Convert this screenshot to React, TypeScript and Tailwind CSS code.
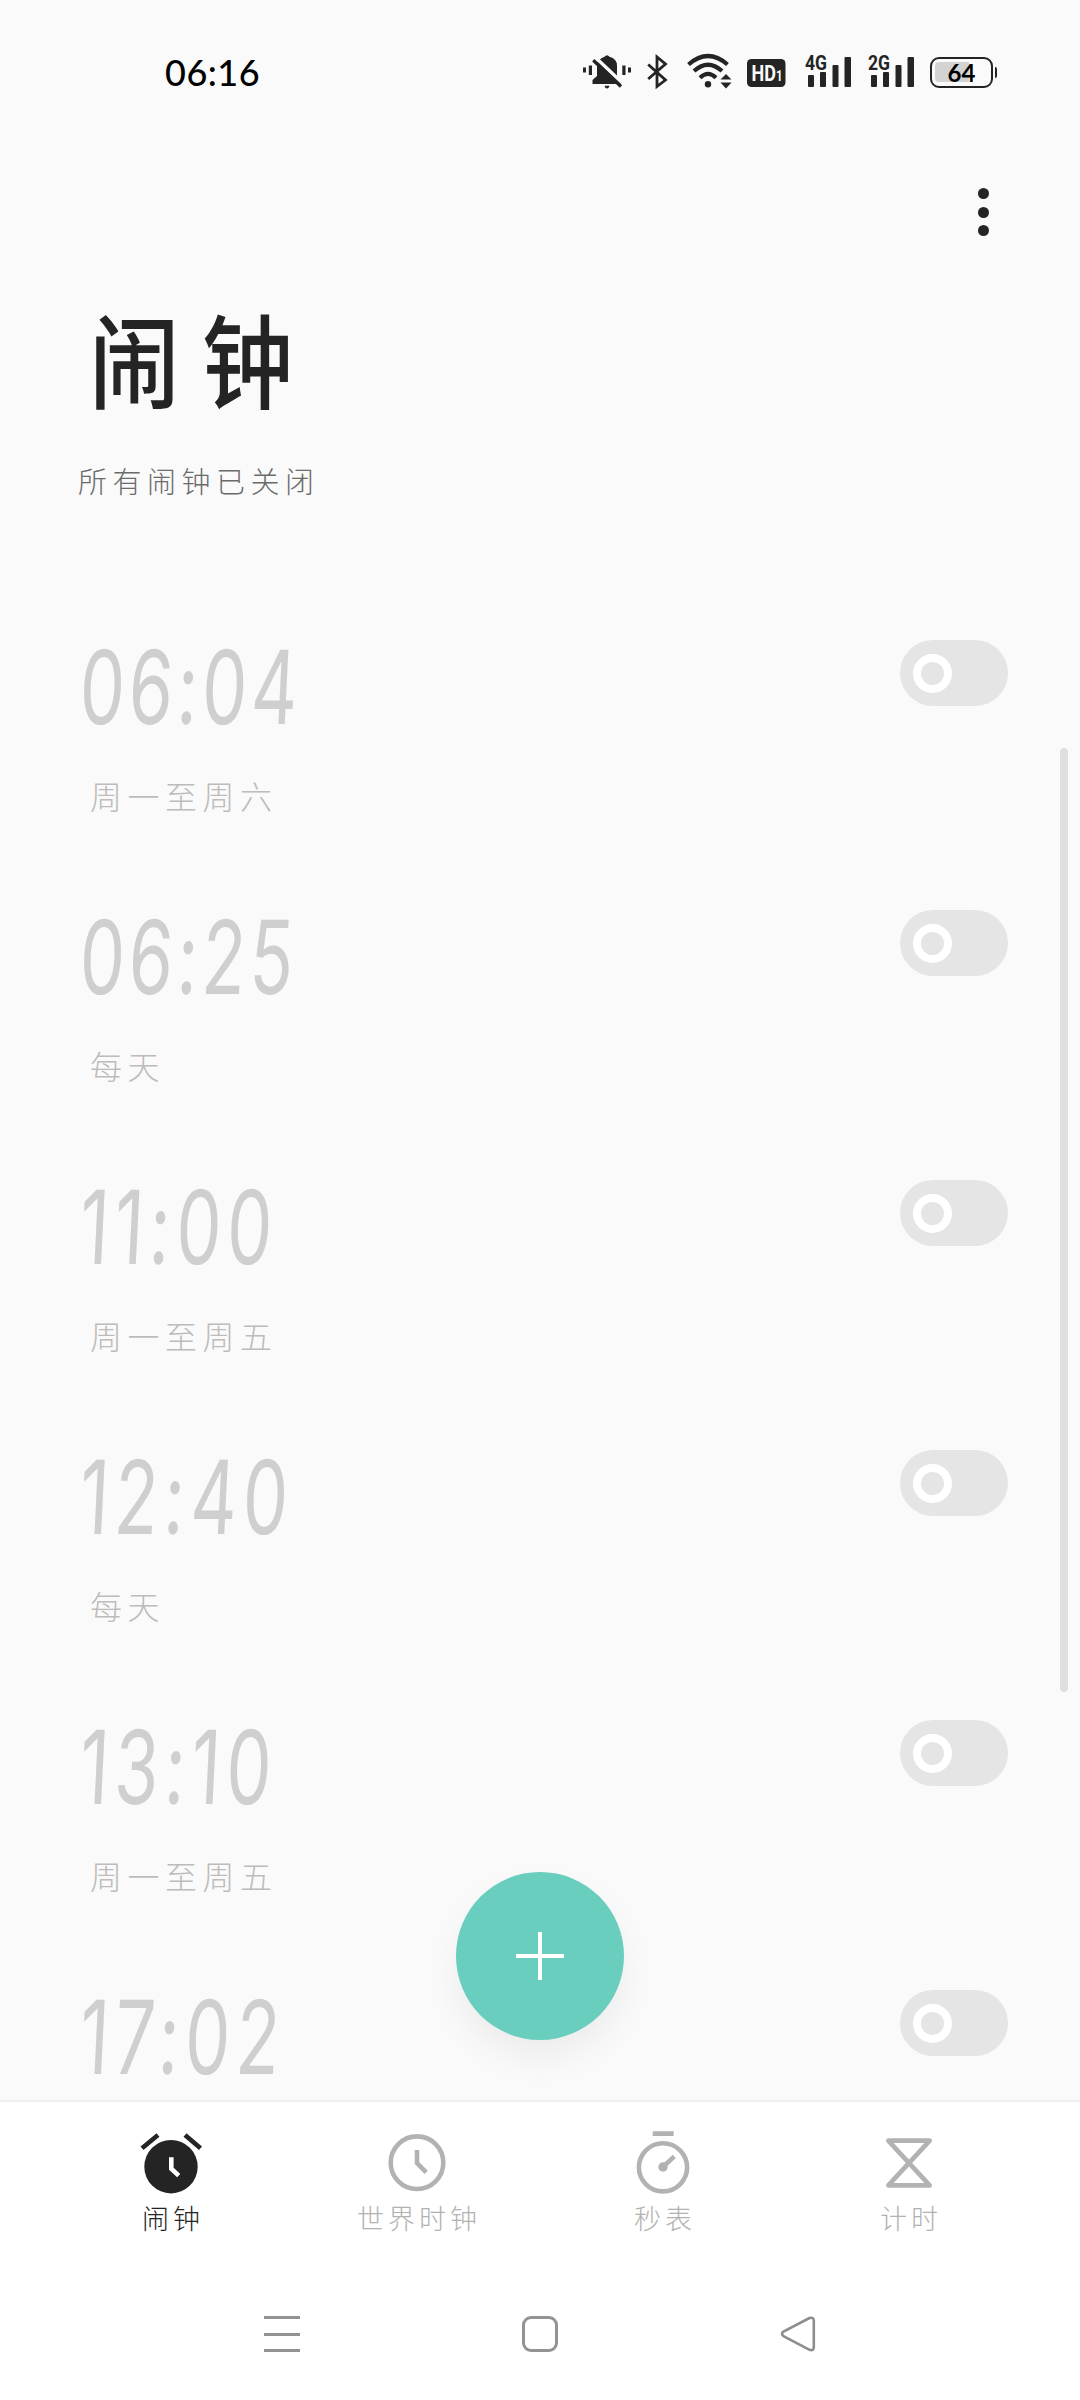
import type { ReactNode } from "react";

interface Alarm {
  time: string;
  repeat?: string;
}

const alarms: Alarm[] = [
  { time: "06:04", repeat: "周一至周六" },
  { time: "06:25", repeat: "每天" },
  { time: "11:00", repeat: "周一至周五" },
  { time: "12:40", repeat: "每天" },
  { time: "13:10", repeat: "周一至周五" },
  { time: "17:02" },
];

function Signal({ label }: { label: string }) {
  return (
    <svg width="46" height="40" viewBox="0 0 46 40" fill="#242424">
      <text
        x="0"
        y="18"
        textLength="22"
        lengthAdjust="spacingAndGlyphs"
        className="font-['Roboto'] text-[20px] font-bold"
      >
        {label}
      </text>
      <rect x="3" y="23" width="6" height="12" rx="1" />
      <rect x="15" y="20" width="6" height="15" rx="1" />
      <rect x="27.5" y="13" width="6" height="22" rx="1" />
      <rect x="39.5" y="5" width="6.5" height="30" rx="1" />
    </svg>
  );
}

function StatusBar() {
  return (
    <div className="flex h-[144px] shrink-0 items-start justify-between pt-[52px] pr-[83px] pl-[165px]">
      <span className="-mt-px font-['Lato'] text-[36px] leading-[42px] font-medium tracking-[0.5px] text-black">
        06:16
      </span>
      <div className="flex">
        <svg width="48" height="40" viewBox="0 0 48 40" fill="#242424">
          <rect x="0" y="15.5" width="3" height="5" />
          <rect x="5.8" y="13.5" width="3.2" height="9.5" />
          <rect x="39.3" y="13.5" width="3.2" height="9.5" />
          <rect x="45" y="15.5" width="3" height="5" />
          <path d="M21.5 4.8Q24 1.5 26.5 4.8Q34 6.5 34 14V24L38.5 29V32H9.5V28L14 24V14Q14.5 7 21.5 4.8Z" />
          <path d="M21.5 33.8H26.5Q26 36.5 24 36.5T21.5 33.8Z" />
          <path d="M12.5 5.5L41 32.5" stroke="#fafafa" strokeWidth="3.5" />
          <path d="M10.3 8.3L38 34.5" stroke="#242424" strokeWidth="3.4" />
        </svg>
        <svg
          className="ml-4"
          width="21"
          height="40"
          viewBox="0 0 21 40"
          fill="none"
          stroke="#242424"
          strokeWidth="2.8"
        >
          <path d="M1.2 12.5L18.5 28L10 34.5V5L18.5 12L1.2 27" />
        </svg>
        <svg className="ml-[19px]" width="46" height="40" viewBox="0 0 46 40" fill="none">
          <g stroke="#242424" strokeWidth="4.2">
            <path d="M1.5 12.5Q21 -4.5 40.5 12.5" />
            <path d="M7 19Q21 6.5 35 19" />
            <path d="M13 25.7Q21 18 29 25.7" />
          </g>
          <circle cx="21" cy="32.2" r="3.2" fill="#242424" />
          <path d="M39 22L44.5 27.5H33.5ZM39 36.5L44.5 30.5H33.5Z" fill="#242424" />
        </svg>
        <svg className="ml-[14px]" width="39" height="40" viewBox="0 0 39 40">
          <rect y="7" width="38.5" height="28" rx="4.5" fill="#242424" />
          <text
            x="4.5"
            y="29"
            textLength="31"
            lengthAdjust="spacingAndGlyphs"
            fill="#fafafa"
            className="font-['Roboto'] text-[22px] font-bold"
          >
            HD<tspan className="text-[14px]">1</tspan>
          </text>
        </svg>
        <div className="ml-[19px] flex gap-[17px]">
          <Signal label="4G" />
          <Signal label="2G" />
        </div>
        <div className="mt-[5px] ml-4 flex h-[31px] items-center">
          <div className="relative flex h-[31px] w-[63px] items-center justify-center rounded-[9px] border-[2.5px] border-[#242424]">
            <div className="absolute top-[3px] left-[3px] h-5 w-[34px] rounded-l-[4px] bg-[#d3d3d3]" />
            <span className="relative font-['Lato'] text-[24px] leading-6 font-bold text-black">
              64
            </span>
          </div>
          <div className="ml-[2px] h-[11px] w-[2px] shrink-0 rounded-r bg-[#242424]" />
        </div>
      </div>
    </div>
  );
}

function AlarmRow({ alarm }: { alarm: Alarm }) {
  return (
    <li className="flex h-[270px] shrink-0 items-start justify-between pt-[2px] pr-[72px] pl-[77px]">
      <div className="flex flex-col items-start">
        <span
          className={`mt-px block h-[120px] origin-bottom-left scale-x-[0.7] -skew-x-4 font-['Inter'] text-[102px] leading-[120px] font-normal whitespace-nowrap text-[#cfcfcf] ${
            alarm.time.startsWith("1") ? "tracking-[8.5px]" : "tracking-[6px]"
          }`}
        >
          {alarm.time}
        </span>
        {alarm.repeat && (
          <span className="mt-7 ml-[13px] text-[32px] leading-10 font-light tracking-[5.5px] text-[#bcbcbc]">
            {alarm.repeat}
          </span>
        )}
      </div>
      <button
        type="button"
        role="switch"
        aria-checked="false"
        className="mt-[14px] flex h-[66px] w-[108px] items-center rounded-full bg-[#e5e5e5] pl-[13px]"
      >
        <span className="size-[39px] rounded-full border-[8px] border-white" />
      </button>
    </li>
  );
}

function Tab({
  label,
  active = false,
  children,
}: {
  label: string;
  active?: boolean;
  children: ReactNode;
}) {
  return (
    <button
      type="button"
      className={`flex flex-1 flex-col items-center pt-7 ${
        active ? "text-[#242424]" : "text-[#b2b2b2]"
      }`}
    >
      <svg width="64" height="68" viewBox="0 0 64 68" fill="none" stroke="currentColor" strokeWidth="4.6">
        {children}
      </svg>
      <span className="mt-0.5 pl-1 text-[27px] leading-9 font-light tracking-[4px]">{label}</span>
    </button>
  );
}

export default function App() {
  return (
    <div className="relative flex h-[2400px] w-[1080px] flex-col overflow-hidden bg-[#fafafa] font-['Noto_Sans_CJK_SC',sans-serif]">
      <StatusBar />

      <header className="flex h-[480px] shrink-0 flex-col px-[78px]">
        <button type="button" className="mt-[44px] mr-[13px] flex flex-col gap-[7.5px] self-end">
          <span className="size-[11px] rounded-full bg-[#242424]" />
          <span className="size-[11px] rounded-full bg-[#242424]" />
          <span className="size-[11px] rounded-full bg-[#242424]" />
        </button>
        <h1 className="mt-[60px] ml-[11px] scale-y-112 text-[91px] leading-[120px] font-medium tracking-[22px] text-[#242424]">
          闹钟
        </h1>
        <p className="mt-[44px] text-[29px] leading-10 font-light tracking-[5.5px] text-[#6b6b6b]">
          所有闹钟已关闭
        </p>
      </header>

      <ul className="flex min-h-0 flex-1 flex-col overflow-hidden">
        {alarms.map((alarm) => (
          <AlarmRow key={alarm.time} alarm={alarm} />
        ))}
      </ul>

      <nav className="flex h-[180px] shrink-0 border-t-2 border-[#eeeeee] bg-white px-12">
        <Tab label="闹钟" active>
          <circle cx="32" cy="36.7" r="26.7" fill="currentColor" stroke="none" />
          <path d="M3 18.3L19 5M61.5 18.3L46 5" />
          <path d="M32.3 27.3V38.7L39.7 45.7" stroke="#fff" />
        </Tab>
        <Tab label="世界时钟">
          <circle cx="32" cy="32.7" r="26.3" />
          <path d="M32 20V33L41.2 42.3" />
        </Tab>
        <Tab label="秒表">
          <circle cx="32" cy="37.3" r="24.1" />
          <path d="M21.7 3.6H42.7M32 37L43.3 26.3" />
          <circle cx="32" cy="37" r="4.7" fill="currentColor" stroke="none" />
        </Tab>
        <Tab label="计时">
          <path d="M11.3 10.6H52.7L11.3 55.4H52.7Z" strokeLinejoin="round" />
        </Tab>
      </nav>

      <div className="flex h-[120px] shrink-0 items-start justify-between bg-white px-[264px] pt-9">
        <div className="flex h-9 w-9 flex-col justify-between">
          <span className="h-[3px] bg-[#939393]" />
          <span className="h-[3px] bg-[#939393]" />
          <span className="h-[3px] bg-[#939393]" />
        </div>
        <div className="h-9 w-9 rounded-[9px] border-[3px] border-[#939393]" />
        <svg width="36" height="36" viewBox="0 0 36 36" fill="none" stroke="#8d8d8d" strokeWidth="2.6">
          <path d="M29.5 2L3.5 15.5Q0.5 17.8 3.5 20.2L29.5 33.8Q33.5 35 33.8 31.5V4.5Q33.5 0.8 29.5 2Z" />
        </svg>
      </div>

      <div className="absolute top-[748px] right-3 h-[944px] w-2 rounded-full bg-[#dfdfdf]" />

      <button
        type="button"
        className="absolute top-[1872px] left-[456px] flex size-[168px] items-center justify-center rounded-full bg-[#6acebe] shadow-[0_18px_36px_rgba(0,0,0,0.06)]"
      >
        <svg width="48" height="48" viewBox="0 0 48 48" stroke="#fff" strokeWidth="4">
          <path d="M24 0V48M0 24H48" />
        </svg>
      </button>
    </div>
  );
}
